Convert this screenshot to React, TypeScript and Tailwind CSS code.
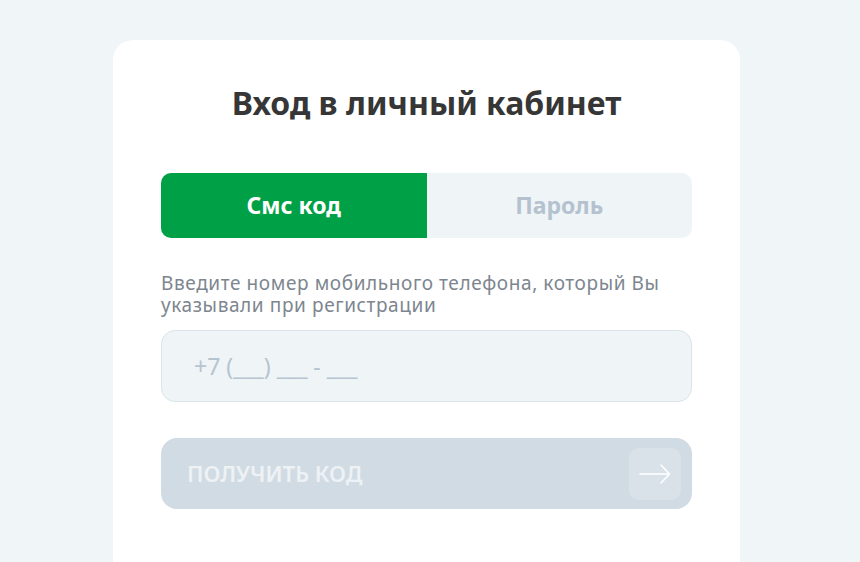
export default function App() {
  return (
    <div className="min-h-[562px] bg-[#f0f5f8] pt-10 font-['Noto_Sans',sans-serif]">
      <div className="ml-[113px] w-[627px] min-h-[540px] rounded-[20px] bg-white px-12 pt-[40px]">
        <h1 className="text-center text-[32px] font-bold leading-[46px] text-[#363636]">
          Вход в личный кабинет
        </h1>

        <div className="mt-[47px] flex h-[65px] overflow-hidden rounded-[10px] bg-[#eff4f7]">
          <button className="flex-1 bg-[#00a046] text-[23px] font-bold text-white">Смс код</button>
          <button className="flex-1 text-[23px] font-bold text-[#b4c2cf]">Пароль</button>
        </div>

        <p className="mt-[34px] pr-4 text-[19px] leading-[22px] tracking-[0.6px] text-[#7d868f]">
          Введите номер мобильного телефона, который Вы указывали при регистрации
        </p>

        <div className="mt-[14px] flex h-[72px] items-center rounded-[14px] border border-[#dbe4ea] bg-[#eff4f7] px-8">
          <span className="text-[23px] text-[#b5c4cf]">+7 (___) ___ - ___</span>
        </div>

        <button className="mt-[36px] flex h-[71px] w-full items-center justify-between rounded-[16px] bg-[#d1dbe3] pl-[26px] pr-[11px]">
          <span className="text-[22px] font-semibold text-[#eef2f5]">ПОЛУЧИТЬ КОД</span>
          <span className="flex h-[52px] w-[52px] items-center justify-center rounded-[10px] bg-[#dae2e9]">
            <svg width="34" height="22" viewBox="0 0 34 22" fill="none" stroke="white" strokeWidth="1.6" strokeLinecap="round" strokeLinejoin="round">
              <path d="M2 11h29" />
              <path d="M23 2l8.5 9-8.5 9" />
            </svg>
          </span>
        </button>
      </div>
    </div>
  );
}
